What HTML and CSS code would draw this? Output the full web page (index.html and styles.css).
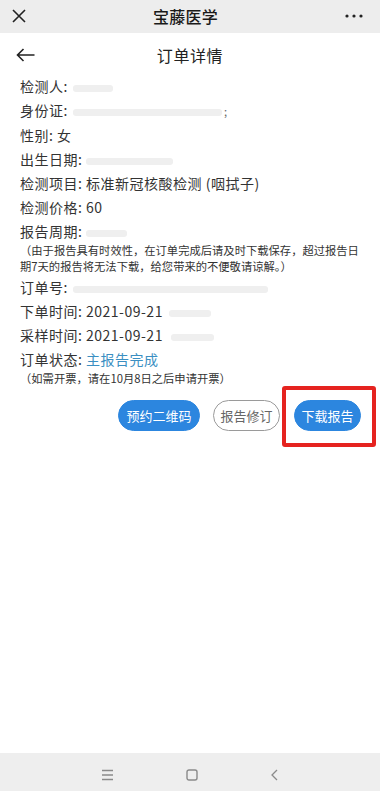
FILE: index.html
```html
<!DOCTYPE html>
<html lang="zh-CN">
<head>
<meta charset="utf-8">
<title>宝藤医学</title>
<link rel="stylesheet" href="styles.css">
</head>
<body>
<div class="page">
  <div class="topbar">
    <svg class="close" width="14" height="14" viewBox="0 0 14 14"><path d="M1 1L13 13M13 1L1 13" stroke="#222" stroke-width="1.6" fill="none"/></svg>
    <div class="app-title">宝藤医学</div>
    <svg class="dots" width="18" height="4" viewBox="0 0 18 4"><circle cx="2" cy="2" r="1.6" fill="#222"/><circle cx="9" cy="2" r="1.6" fill="#222"/><circle cx="16" cy="2" r="1.6" fill="#222"/></svg>
  </div>
  <div class="header">
    <svg class="back" width="19" height="14" viewBox="0 0 19 14"><path d="M18.5 7H1.5M7.5 1L1.5 7L7.5 13" stroke="#222" stroke-width="1.6" fill="none"/></svg>
    <div class="page-title">订单详情</div>
  </div>
  <div class="content">
    <div class="row">检测人:<span class="mask w40 m5"></span></div>
    <div class="row">身份证:<span class="mask w149 m5"></span><span class="tail">;</span></div>
    <div class="row">性别: 女</div>
    <div class="row">出生日期:<span class="mask w87 m4"></span></div>
    <div class="row">检测项目: 标准新冠核酸检测 (咽拭子)</div>
    <div class="row">检测价格: 60</div>
    <div class="row">报告周期:<span class="mask w41 m4"></span></div>
    <div class="note">（由于报告具有时效性，在订单完成后请及时下载保存，超过报告日期7天的报告将无法下载，给您带来的不便敬请谅解。）</div>
    <div class="row">订单号:<span class="mask w195 m5"></span></div>
    <div class="row">下单时间: 2021-09-21<span class="mask w42 m6"></span></div>
    <div class="row">采样时间: 2021-09-21<span class="mask w43 m8"></span></div>
    <div class="row">订单状态: <span class="status">主报告完成</span></div>
    <div class="note">（如需开票，请在10月8日之后申请开票）</div>
    <div class="actions">
      <button class="btn primary wide">预约二维码</button>
      <button class="btn outline">报告修订</button>
      <div class="highlight-wrap">
        <button class="btn primary">下载报告</button>
        <div class="highlight"></div>
      </div>
    </div>
  </div>
  <div class="spacer"></div>
  <div class="navbar">
    <svg width="11" height="12" viewBox="0 0 11 12"><path d="M0 1.5H11M0 6H11M0 10.5H11" stroke="#8a8a8a" stroke-width="1.3"/></svg>
    <svg width="12" height="12" viewBox="0 0 12 12"><rect x="1" y="1" width="10" height="10" rx="2" stroke="#8a8a8a" stroke-width="1.4" fill="none"/></svg>
    <svg width="7" height="12" viewBox="0 0 7 12"><path d="M6 1L1 6L6 11" stroke="#8a8a8a" stroke-width="1.3" fill="none"/></svg>
  </div>
</div>
</body>
</html>
```
FILE: styles.css
```css
* { box-sizing: border-box; }
html, body { margin: 0; padding: 0; background: #fff; }
body {
  font-family: "Noto Sans CJK SC", "Noto Sans", sans-serif;
  color: #333;
}
.page {
  width: 380px;
  height: 791px;
  display: flex;
  flex-direction: column;
  overflow: hidden;
}
.topbar {
  height: 33px;
  background: #ededed;
  display: flex;
  align-items: center;
  justify-content: space-between;
  padding: 0 17px 2px 12px;
}
.app-title {
  font-size: 16px;
  font-weight: 500;
  color: #1a1a1a;
  letter-spacing: 0.3px;
}
.close { margin-top: 1px; }
.header {
  height: 44px;
  display: flex;
  align-items: center;
  justify-content: center;
  position: relative;
}
.back { position: absolute; left: 16px; top: 15px; }
.page-title {
  font-size: 16px;
  color: #222;
  letter-spacing: 0.6px;
}
.content {
  padding: 0 0 0 20px;
}
.row {
  font-size: 14px;
  line-height: 24px;
  letter-spacing: 0.5px;
  color: #333;
  white-space: nowrap;
}
.row:first-child { margin-top: -2px; line-height: 23px; }
.mask {
  display: inline-block;
  height: 7px;
  background: #efefef;
  border-radius: 3px;
  vertical-align: middle;
}
.w40 { width: 40px; }
.w149 { width: 149px; }
.w87 { width: 87px; }
.w41 { width: 41px; }
.w195 { width: 195px; }
.w42 { width: 42px; }
.w43 { width: 43px; }
.m4 { margin-left: 4px; }
.m5 { margin-left: 5px; }
.m6 { margin-left: 6px; }
.m8 { margin-left: 8px; }
.tail { color: #666; font-size: 11px; margin-left: 2px; }
.note {
  font-size: 11.3px;
  line-height: 16px;
  color: #333;
  padding-right: 14px;
  margin-top: -1px;
  margin-bottom: 1px;
}
.status { color: #3b8fc2; }
.actions {
  display: flex;
  justify-content: flex-end;
  align-items: center;
  gap: 13px;
  padding-right: 19px;
  margin-top: 14px;
}
.btn {
  width: 67px;
  height: 31px;
  border-radius: 16px;
  font-family: inherit;
  font-size: 13px;
  padding: 0;
  border: 1px solid transparent;
  line-height: 29px;
  text-align: center;
  cursor: pointer;
}
.btn.wide { width: 82px; }
.btn.primary {
  background: #2c86df;
  color: #fff;
  border-color: #2c86df;
}
.btn.outline {
  background: #fff;
  color: #666;
  border-color: #9a9a9a;
}
.highlight-wrap { position: relative; margin-left: 1px; }
.highlight {
  position: absolute;
  left: -12px;
  right: -15px;
  top: -14px;
  bottom: -16px;
  border: 4px solid #e5231f;
  border-radius: 3px;
}
.spacer { flex: 1; }
.navbar {
  height: 38px;
  background: #eeeeee;
  display: flex;
  align-items: center;
  justify-content: center;
  gap: 73px;
  padding-top: 6px;
}
```
